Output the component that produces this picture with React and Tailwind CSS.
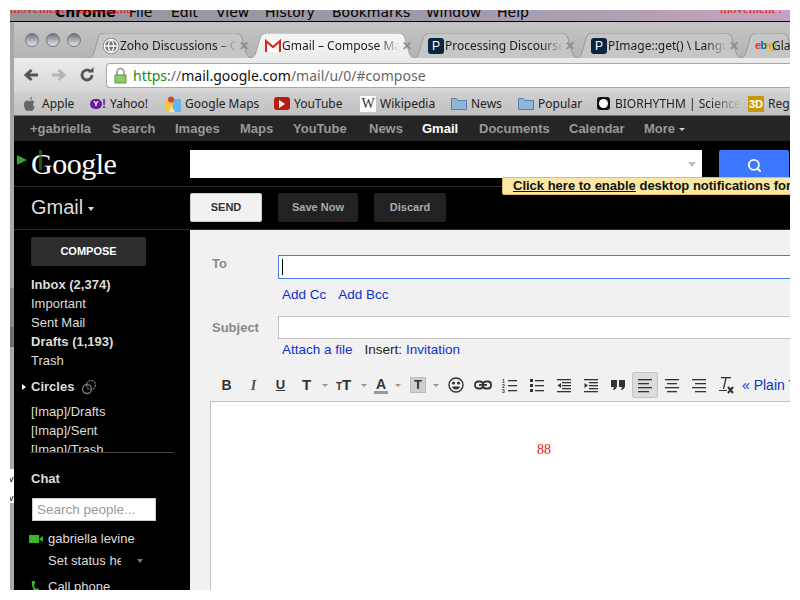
import React from "react";
import { Globe, Search } from "lucide-react";

const lucida = { fontFamily: '"DejaVu Sans", sans-serif' };
const noto = { fontFamily: '"Noto Sans", sans-serif' };

function Ico({ children, w = 16, h = 16, className = "" }) {
  return (
    <svg width={w} height={h} viewBox={`0 0 ${w} ${h}`} className={`shrink-0 ${className}`}>
      {children}
    </svg>
  );
}

const Lines = ({ rows }) => (
  <Ico>
    {rows.map((r, i) => (
      <rect key={i} x={r[0]} y={r[1]} width={r[2]} height="1.3" fill="#333" />
    ))}
  </Ico>
);

function GmailIcon() {
  return (
    <Ico>
      <rect x="0.5" y="2" width="15" height="12" fill="#fff" />
      <path d="M1 14V3l7 6 7-6v11" fill="none" stroke="#d8281f" strokeWidth="2.2" />
    </Ico>
  );
}

function PIcon() {
  return (
    <span className="w-[16px] h-[16px] rounded-[3px] bg-[#0b2440] text-white text-[12px] leading-[16px] text-center shrink-0 font-['Liberation_Sans',sans-serif]">
      P
    </span>
  );
}

function Tab({ width, active, icon, title, close = true }) {
  const fill = active ? "url(#tabActive)" : "#c6c6c6";
  return (
    <div className={`relative h-[25px] shrink-0 -mr-[4px] ${active ? "z-10" : ""}`} style={{ width }}>
      <svg className="absolute inset-0" width={width} height="25">
        <defs>
          <linearGradient id="tabActive" x1="0" y1="0" x2="0" y2="1">
            <stop offset="0" stopColor="#f6f6f6" />
            <stop offset="1" stopColor="#ececec" />
          </linearGradient>
        </defs>
        <path
          d={`M0 25 C6 25 6 22 8 16 L11 5 C12 2 14 0 18 0 L${width - 18} 0 C${width - 14} 0 ${width - 12} 2 ${width - 11} 5 L${width - 8} 16 C${width - 6} 22 ${width - 6} 25 ${width} 25`}
          fill={fill}
          stroke={active ? "#a0a0a0" : "#989898"}
        />
      </svg>
      <div className="relative flex items-center h-[25px] pl-[16px] pr-[3px] gap-[1px]">
        {icon}
        <span className="flex-1 overflow-hidden whitespace-nowrap text-[12px] text-[#1c1c1c] [mask-image:linear-gradient(to_right,black_82%,transparent)]" style={noto}>
          {title}
        </span>
        {close && <span className="text-[#8c8c8c] text-[12px] font-bold w-[12px] text-center font-['Liberation_Sans',sans-serif]">✕</span>}
      </div>
    </div>
  );
}

function Bookmark({ width, icon, label, className = "" }) {
  return (
    <div className="flex items-center gap-[4px] shrink-0 overflow-hidden" style={{ width }}>
      {icon}
      <span className={`text-[12px] text-[#222] whitespace-nowrap ${className}`} style={noto}>
        {label}
      </span>
    </div>
  );
}

const Folder = () => (
  <Ico>
    <path d="M0.5 2.5h5l1.500 2h8.500v9H0.5z" fill="#8fb6d8" stroke="#5a7f9f" />
  </Ico>
);

function Light() {
  return <div className="w-[14px] h-[14px] rounded-full border border-[#6f7378] bg-linear-to-b from-[#70767d] via-[#a8afb6] to-[#e0e4e8]" />;
}

function TB({ w = 27, children, caret, className = "" }) {
  return (
    <div className={`flex items-center shrink-0 h-[26px] ${caret ? "" : "justify-center"} ${className}`} style={{ width: w }}>
      {children}
      {caret && <span className="ml-[7px] w-0 h-0 border-x-[3px] border-t-[3px] border-x-transparent border-t-[#999]" />}
    </div>
  );
}

const navTop = [
  ["+gabriella", 82], ["Search", 63], ["Images", 65], ["Maps", 53], ["YouTube", 76],
  ["News", 53], ["Gmail", 57], ["Documents", 90], ["Calendar", 75],
];

const Arrow = () => <span className="inline-block ml-[4px] mb-[2px] w-0 h-0 border-x-[3px] border-t-[3px] border-x-transparent border-t-[#ccc]" />;

export default function App() {
  return (
    <div className="w-[800px] h-[600px] bg-white overflow-hidden p-[10px] font-['Liberation_Sans',Arial,sans-serif]">
      <div className="relative h-[580px] w-[780px] overflow-hidden flex flex-col">
        {/* OS menu bar */}
        <div className="relative h-[12px] shrink-0 overflow-hidden border-b border-black bg-linear-to-r from-[#96969a] via-[#9c98aa] to-[#c4a4c0] flex items-end text-[14px] leading-[14px] text-black pb-[2px]" style={lucida}>
          <span className="pl-[45px] w-[119px] font-bold">Chrome</span>
          <span className="w-[42px]">File</span>
          <span className="w-[45px]">Edit</span>
          <span className="w-[49px]">View</span>
          <span className="w-[67px]">History</span>
          <span className="w-[94px]">Bookmarks</span>
          <span className="w-[71px]">Window</span>
          <span>Help</span>
          <span className="absolute left-[0px] top-[-8px] text-[13px] text-[#e8120c] font-['Liberation_Serif',serif]">movement : movement</span>
          <span className="absolute left-[710px] top-[-8px] text-[13px] text-[#e8120c] font-['Liberation_Serif',serif]">movement :</span>
        </div>

        <div className="flex flex-1 min-h-0">
          {/* sliver of the window behind */}
          <div className="w-[4px] shrink-0 flex flex-col bg-[#a8a8a8]">
            <div className="h-[266px] bg-[#a8a8a8]" />
            <div className="h-[39px] bg-[#8a8a8a]" />
            <div className="h-[20px] bg-[#6e6e6e]" />
            <div className="h-[122px] bg-[#a8a8a8]" />
            <div className="h-[34px] bg-white text-[9px] leading-[19px] text-black pt-[1px] -ml-[1px]">v<br />v</div>
            <div className="flex-1 bg-[#a8a8a8]" />
          </div>

          <div className="flex-1 min-w-0 flex flex-col overflow-hidden">
            {/* tab strip */}
            <div className="h-[36px] shrink-0 bg-linear-to-b from-[#c4c4c4] to-[#b4b4b4] flex items-end overflow-hidden">
              <div className="flex items-center gap-[7px] pl-[11px] w-[73px] h-[36px] pb-[1px] shrink-0">
                <Light /><Light /><Light />
              </div>
              <Tab width={166} title="Zoho Discussions – Cr" icon={<Globe size={16} className="text-white bg-[#777] rounded-full shrink-0" />} />
              <Tab width={167} active title="Gmail – Compose Mail" icon={<GmailIcon />} />
              <Tab width={167} title="Processing Discourse" icon={<PIcon />} />
              <Tab width={168} title="PImage::get() \ Language" icon={<PIcon />} />
              <Tab width={60} close={false} title="Glass" icon={
                <span className="w-[16px] shrink-0 text-[11px] font-bold tracking-[-1px] font-['Liberation_Sans',sans-serif]">
                  <span className="text-[#e53238]">e</span><span className="text-[#0064d2]">b</span><span className="text-[#f5af02]">a</span><span className="text-[#86b817]">y</span>
                </span>} />
            </div>

            {/* toolbar */}
            <div className="h-[34px] shrink-0 bg-linear-to-b from-[#ececec] to-[#d6d6d6] flex items-center">
              <div className="w-[92px] shrink-0 flex items-center pl-[9px] gap-[12px]">
                <Ico>
                  <path d="M15 8H4M8.500 3L3 8l5.500 5" fill="none" stroke="#555" strokeWidth="3" />
                </Ico>
                <Ico>
                  <path d="M1 8h11M7.500 3L13 8l-5.500 5" fill="none" stroke="#b4b4b4" strokeWidth="3" />
                </Ico>
                <Ico>
                  <path d="M13 8a5 5 0 1 1-1.600-3.700" fill="none" stroke="#555" strokeWidth="2.800" />
                  <path d="M9 5.500h5.500V0z" fill="#555" />
                </Ico>
              </div>
              <div className="flex-1 h-[25px] bg-white border border-r-0 border-[#a8a8a8] rounded-l-[4px] flex items-center pl-[6px] gap-[5px] overflow-hidden">
                <Ico w={15} h={17}>
                  <path d="M4 8V5a3.500 3.500 0 0 1 7 0v3" fill="none" stroke="#999" strokeWidth="1.600" />
                  <rect x="2" y="8" width="11" height="8" fill="#8ec96a" stroke="#5a9a3c" />
                </Ico>
                <span className="text-[14px] whitespace-nowrap text-[#666]" style={noto}>
                  <span className="text-[#1a8a1a]">https</span>://<span className="text-[#111]">mail.google.com</span>/mail/u/0/#compose
                </span>
              </div>
            </div>

            {/* bookmarks */}
            <div className="h-[24px] shrink-0 bg-linear-to-b from-[#d0d0d0] to-[#c0c0c0] border-b border-[#777] flex items-center pl-[9px] overflow-hidden">
              <Bookmark width={67} label="Apple" icon={
                <Ico w={13} h={16} className="mr-[2px]">
                  <path d="M9 1C8 1 7 2 7 4c1 0 2-1 2-3zM6.500 5C5 4 1 4 1 9c0 3 2 6 3.500 6 1 0 1-.5 2-.5s1 .5 2 .5c1.500 0 3-3 3-4-2-1-2-4 0-5-1.500-2-4-2-5 0z" fill="#666" />
                </Ico>} />
              <Bookmark width={75} label="Yahoo!" icon={
                <span className="w-[16px] flex items-center shrink-0">
                  <span className="w-[12px] h-[10px] rounded-full bg-[#6a1b9a] text-white text-[8px] font-bold leading-[10px] text-center">Y</span>
                  <span className="text-[#6a1b9a] text-[12px] font-bold leading-[12px]">!</span>
                </span>} />
              <Bookmark width={109} label="Google Maps" icon={
                <Ico>
                  <rect y="3" width="8" height="13" fill="#f5c34a" />
                  <rect x="8" y="3" width="8" height="13" fill="#62b5f0" />
                  <path d="M6 10l4 6H4z" fill="#f8e6a0" />
                  <circle cx="6" cy="3.500" r="3" fill="#d9442f" />
                </Ico>} />
              <Bookmark width={86} label="YouTube" icon={
                <span className="w-[16px] h-[13px] rounded-[3px] bg-[#b81a14] flex items-center justify-center shrink-0">
                  <span className="w-0 h-0 border-y-[4px] border-l-[6px] border-y-transparent border-l-white" />
                </span>} />
              <Bookmark width={91} label="Wikipedia" icon={
                <span className="w-[16px] h-[16px] bg-white text-[#333] text-[14px] leading-[16px] text-center shrink-0 font-['Liberation_Serif',serif]">W</span>} />
              <Bookmark width={67} label="News" icon={<Folder />} />
              <Bookmark width={79} label="Popular" icon={<Folder />} />
              <Bookmark width={151} label="BIORHYTHM | Science" className="[mask-image:linear-gradient(to_right,black_75%,transparent)]" icon={
                <span className="w-[13px] h-[13px] rounded-[3px] bg-[#111] flex items-center justify-center shrink-0 mr-[1px]">
                  <span className="w-[9px] h-[9px] rounded-full bg-white" />
                </span>} />
              <Bookmark width={50} label="Regi" icon={
                <span className="w-[16px] h-[16px] bg-[#c8980c] text-white text-[11px] font-bold leading-[16px] text-center shrink-0">3D</span>} />
            </div>

            {/* google bar */}
            <div className="h-[25px] shrink-0 bg-[#252525] flex items-center pl-[16px] text-[13px] font-bold text-[#999] whitespace-nowrap overflow-hidden">
              {navTop.map(([t, w]) => (
                <span key={t} className={t === "Gmail" ? "text-white" : ""} style={{ width: w }}>{t}</span>
              ))}
              <span>More<Arrow /></span>
            </div>

            {/* search row */}
            <div className="h-[46px] shrink-0 bg-black border-b border-[#2c2c2c] flex items-start overflow-hidden">
              <div className="relative w-[176px] h-[45px] shrink-0 pl-[17px] pt-[4px] text-white text-[30px] leading-[38px] tracking-[-0.5px] font-['Liberation_Serif',serif]">
                Google
                <span className="absolute left-[3px] top-[14px] w-0 h-0 border-y-[5px] border-l-[10px] border-y-transparent border-l-[#2fa52f]" />
                <span className="absolute left-[25px] top-[9px] w-[3px] h-[20px] bg-[#2a7a2a]/70" />
              </div>
              <div className="w-[512px] h-[28px] mt-[9px] bg-white shrink-0 flex items-center justify-end pr-[6px]">
                <span className="w-0 h-0 border-x-[4px] border-t-[5px] border-x-transparent border-t-[#c0c0c0]" />
              </div>
              <div className="w-[70px] h-[30px] mt-[9px] ml-[17px] rounded-[2px] bg-[#3b78ff] flex items-center justify-center shrink-0">
                <Search size={15} strokeWidth={3} className="text-white" />
              </div>
            </div>

            {/* actions row */}
            <div className="relative h-[43px] shrink-0 bg-black border-b border-[#2c2c2c] flex">
              <div className="w-[176px] shrink-0 pl-[17px] pt-[7px] text-[20px] leading-[26px] text-[#ddd]">
                Gmail<span className="inline-block ml-[5px] mb-[3px] w-0 h-0 border-x-[3.5px] border-t-[4px] border-x-transparent border-t-[#ddd]" />
              </div>
              <div className="flex items-start gap-[16px] pt-[6px] text-[11px] font-bold">
                <div className="w-[72px] h-[29px] rounded-[2px] bg-[#f1f1f1] border border-[#ccc] text-[#333] flex items-center justify-center">SEND</div>
                <div className="w-[80px] h-[29px] rounded-[2px] bg-[#222] text-[#aaa] flex items-center justify-center">Save Now</div>
                <div className="w-[72px] h-[29px] rounded-[2px] bg-[#222] text-[#aaa] flex items-center justify-center">Discard</div>
              </div>
            </div>

            {/* body */}
            <div className="flex-1 min-h-0 flex overflow-hidden">
              <aside className="w-[176px] shrink-0 bg-black text-[13px] text-[#ddd] overflow-hidden">
                <div className="mt-[7px] ml-[17px] w-[115px] h-[29px] rounded-[2px] bg-[#2d2d2d] text-white text-[11px] font-bold flex items-center justify-center">COMPOSE</div>
                <div className="mt-[9px] pl-[17px] leading-[19px]">
                  <div className="font-bold">Inbox (2,374)</div>
                  <div>Important</div>
                  <div>Sent Mail</div>
                  <div className="font-bold">Drafts (1,193)</div>
                  <div>Trash</div>
                </div>
                <div className="mt-[7px] h-[19px] flex items-center pl-[8px] font-bold">
                  <span className="w-0 h-0 border-y-[3.5px] border-l-[4px] border-y-transparent border-l-white mr-[5px]" />
                  Circles
                  <svg width="16" height="16" viewBox="0 0 16 16" className="ml-[7px]" fill="none" stroke="#777" strokeWidth="1.3">
                    <circle cx="6" cy="10" r="4.500" />
                    <circle cx="10" cy="6" r="4.500" strokeDasharray="2 1" />
                  </svg>
                </div>
                <div className="mt-[6px] h-[51px] mx-[16px] overflow-hidden leading-[19px] border-b border-[#444]">
                  <div className="ml-[1px]">[Imap]/Drafts</div>
                  <div className="ml-[1px]">[Imap]/Sent</div>
                  <div className="ml-[1px]">[Imap]/Trash</div>
                </div>
                <div className="mt-[18px] pl-[17px] font-bold leading-[16px]">Chat</div>
                <div className="mt-[11px] ml-[18px] w-[124px] h-[23px] bg-white border border-[#ccc] text-[#999] text-[13.5px] leading-[21px] pl-[4px]">Search people...</div>
                <div className="mt-[9px] flex items-center pl-[15px] h-[18px]">
                  <Ico w={15} h={10} className="mr-[4px]">
                    <rect y="1" width="10" height="8" fill="#35b82a" />
                    <path d="M10 5l4-3v6z" fill="#35b82a" />
                  </Ico>
                  gabriella levine
                </div>
                <div className="mt-[4px] flex items-center pl-[34px] h-[18px]">
                  <span className="w-[73px] overflow-hidden whitespace-nowrap">Set status here</span>
                  <span className="ml-[16px] w-0 h-0 border-x-[3.5px] border-t-[4px] border-x-transparent border-t-[#777]" />
                </div>
                <div className="mt-[8px] flex items-center pl-[17px] h-[18px]">
                  <svg width="10" height="14" viewBox="0 0 10 14" className="mr-[7px]">
                    <path d="M1 1l3 0 0 3-1 1c0 2 1 3 2 4l2-1 2 3-2 2C3 12 0 6 1 1z" fill="#35b82a" />
                  </svg>
                  Call phone
                </div>
              </aside>

              <main className="flex-1 min-w-0 bg-[#f1f1f1] flex flex-col overflow-hidden text-[13.5px]">
                <div className="flex mt-[25px] pl-[22px]">
                  <span className="w-[66px] shrink-0 pt-[1px] text-[13px] font-bold leading-[16px] text-[#888]">To</span>
                  <div className="flex-1 h-[24px] bg-white border border-[#4d78e8] border-r-0 flex items-center pl-[3px]">
                    <span className="w-px h-[16px] bg-black" />
                  </div>
                </div>
                <div className="flex gap-[12px] pl-[92px] mt-[8px] leading-[16px] text-[#1030cc]">
                  <span>Add Cc</span>
                  <span>Add Bcc</span>
                </div>
                <div className="flex mt-[13px] pl-[22px] items-center">
                  <span className="w-[66px] shrink-0 text-[13px] font-bold text-[#888]">Subject</span>
                  <div className="flex-1 h-[23px] bg-white border border-[#c0c0c0] border-r-0" />
                </div>
                <div className="flex pl-[92px] mt-[3px] leading-[16px] whitespace-nowrap">
                  <span className="text-[#1030cc]">Attach a file</span>
                  <span className="ml-[12px] text-[#222]">Insert:</span>
                  <span className="ml-[4px] text-[#1030cc]">Invitation</span>
                </div>

                {/* format toolbar */}
                <div className="flex items-center mt-[14px] pl-[23px] h-[26px] whitespace-nowrap">
                  <TB><span className="font-bold text-[#333] text-[14px]">B</span></TB>
                  <TB><span className="italic font-bold text-[#555] text-[14px] font-['Liberation_Serif',serif]">I</span></TB>
                  <TB><span className="underline font-bold text-[#333] text-[13px]">U</span></TB>
                  <TB w={37} caret><span className="ml-[8px] w-[13px] font-bold text-[#333] text-[15px]">T</span></TB>
                  <TB w={37} caret><span className="ml-[5px] w-[18px] font-bold text-[#333] text-[15px]"><span className="text-[10px]">T</span>T</span></TB>
                  <TB w={37} caret><span className="ml-[6px] w-[14px] text-center font-bold text-[#333] text-[14px] leading-[14px] border-b-[3px] border-[#999]">A</span></TB>
                  <TB w={37} caret><span className="ml-[5px] w-[16px] h-[16px] text-center bg-[#d0d0d0] border border-[#bbb] font-bold text-[#333] text-[13px] leading-[14px]">T</span></TB>
                  <TB>
                    <svg width="16" height="16" viewBox="0 0 16 16" fill="none" stroke="#333" strokeWidth="1.4">
                      <circle cx="8" cy="8" r="7" />
                      <circle cx="5.500" cy="6" r=".8" fill="#333" />
                      <circle cx="10.500" cy="6" r=".8" fill="#333" />
                      <path d="M4 9.500h8c-.5 2-2 3-4 3s-3.500-1-4-3z" fill="#333" stroke="none" />
                    </svg>
                  </TB>
                  <TB>
                    <Ico w={18} h={10}>
                      <rect x="1" y="1.500" width="8" height="7" rx="3" fill="none" stroke="#333" strokeWidth="1.800" />
                      <rect x="9" y="1.500" width="8" height="7" rx="3" fill="none" stroke="#333" strokeWidth="1.800" />
                      <rect x="5" y="4" width="8" height="1.800" fill="#333" />
                    </Ico>
                  </TB>
                  <TB>
                    <Ico>
                      <text x="0" y="6" fontSize="5" fontWeight="bold" fill="#333">1</text>
                      <text x="0" y="11" fontSize="5" fontWeight="bold" fill="#333">2</text>
                      <text x="0" y="16" fontSize="5" fontWeight="bold" fill="#333">3</text>
                      <rect x="6" y="3" width="9" height="1.300" fill="#333" />
                      <rect x="6" y="8" width="9" height="1.300" fill="#333" />
                      <rect x="6" y="13" width="9" height="1.300" fill="#333" />
                    </Ico>
                  </TB>
                  <TB>
                    <Ico>
                      <rect x="1" y="2" width="3" height="3" fill="#333" />
                      <rect x="1" y="7" width="3" height="3" fill="#333" />
                      <rect x="1" y="12" width="3" height="3" fill="#333" />
                      <rect x="6" y="3" width="9" height="1.300" fill="#333" />
                      <rect x="6" y="8" width="9" height="1.300" fill="#333" />
                      <rect x="6" y="13" width="9" height="1.300" fill="#333" />
                    </Ico>
                  </TB>
                  <TB>
                    <Ico>
                      <path d="M5 6v5L1.500 8.500z" fill="#333" />
                      <rect x="1" y="2" width="14" height="1.300" fill="#333" />
                      <rect x="6" y="5" width="9" height="1.300" fill="#333" />
                      <rect x="6" y="8" width="9" height="1.300" fill="#333" />
                      <rect x="6" y="11" width="9" height="1.300" fill="#333" />
                      <rect x="1" y="14" width="14" height="1.300" fill="#333" />
                    </Ico>
                  </TB>
                  <TB>
                    <Ico>
                      <path d="M1.500 6v5L5 8.500z" fill="#333" />
                      <rect x="1" y="2" width="14" height="1.300" fill="#333" />
                      <rect x="6" y="5" width="9" height="1.300" fill="#333" />
                      <rect x="6" y="8" width="9" height="1.300" fill="#333" />
                      <rect x="6" y="11" width="9" height="1.300" fill="#333" />
                      <rect x="1" y="14" width="14" height="1.300" fill="#333" />
                    </Ico>
                  </TB>
                  <TB w={28}>
                    <Ico>
                      <path d="M1 3h6v6c0 2-2 4-4 4l1-3H1zM9 3h6v6c0 2-2 4-4 4l1-3H9z" fill="#333" />
                    </Ico>
                  </TB>
                  <TB w={26} className="rounded-[2px] bg-[#dcdcdc] border border-[#c4c4c4]">
                    <Lines rows={[[1, 2, 14], [1, 6, 11], [1, 10, 14], [1, 14, 11]]} />
                  </TB>
                  <TB>
                    <Lines rows={[[1, 2, 14], [3, 6, 10], [1, 10, 14], [3, 14, 10]]} />
                  </TB>
                  <TB>
                    <Lines rows={[[1, 2, 14], [4, 6, 11], [1, 10, 14], [4, 14, 11]]} />
                  </TB>
                  <TB w={28}>
                    <Ico w={16} h={18}>
                      <rect x="3" y="1" width="10" height="1.300" fill="#333" />
                      <path d="M8 2L5.500 13" stroke="#333" strokeWidth="1.300" />
                      <rect x="1" y="14" width="8" height="1" fill="#333" />
                      <path d="M10 11l5 6M15 11l-5 6" stroke="#333" strokeWidth="2" />
                    </Ico>
                  </TB>
                  <span className="ml-[2px] text-[#1030cc] text-[14px]">« Plain Text</span>
                </div>

                {/* editor */}
                <div className="flex-1 ml-[20px] mt-[3px] bg-white border-t border-l border-[#c0c0c0] pt-[40px] pl-[326px] text-[#e8120c] text-[14px] leading-[16px] font-['Liberation_Serif',serif]">
                  88
                </div>
              </main>
            </div>
          </div>
        </div>

        {/* desktop-notification prompt */}
        <div className="absolute left-[492px] top-[167px] w-[300px] h-[18px] bg-[#f9e7a5] border border-[#e8b95f] rounded-l-[2px] pl-[10px] text-[13px] leading-[16px] font-bold text-[#111] whitespace-nowrap overflow-hidden">
          <span className="underline">Click here to enable</span> desktop notifications for Gmail.
        </div>
      </div>
    </div>
  );
}
